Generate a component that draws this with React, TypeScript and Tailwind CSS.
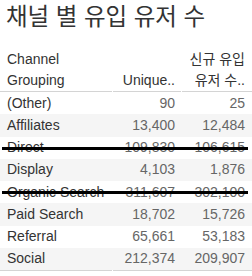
import React from 'react';

type Row = { name: string; unique: string; fresh: string; struck?: boolean };

const rows: Row[] = [
  { name: '(Other)', unique: '90', fresh: '25' },
  { name: 'Affiliates', unique: '13,400', fresh: '12,484' },
  { name: 'Direct', unique: '109,830', fresh: '106,615', struck: true },
  { name: 'Display', unique: '4,103', fresh: '1,876' },
  { name: 'Organic Search', unique: '311,607', fresh: '302,100', struck: true },
  { name: 'Paid Search', unique: '18,702', fresh: '15,726' },
  { name: 'Referral', unique: '65,661', fresh: '53,183' },
  { name: 'Social', unique: '212,374', fresh: '209,907' },
];

const font = { fontFamily: '"Liberation Sans", "Noto Sans CJK KR", sans-serif' };

export default function App() {
  return (
    <div className="w-[252px] h-[276px] bg-white overflow-hidden text-[#333]" style={font}>
      <h1 className="pl-[6px] pt-[2px] h-[48px] text-[23.5px] leading-[30px]">
        채널 별 유입 유저 수
      </h1>

      <div className="grid grid-cols-[113px_69px_70px] text-[14px] leading-[21px]">
        <div className="border-b border-[#d4d4d4] pl-[7px] pt-[1px] mr-[1px]">
          Channel
          <br />
          Grouping
        </div>
        <div className="border-b border-[#d4d4d4] flex items-end justify-end pr-[6px] mr-[1px]">
          Unique..
        </div>
        <div className="border-b border-[#d4d4d4] text-right pr-[7px] pt-[1px]">
          신규 유입
          <br />
          유저 수..
        </div>
      </div>

      <div className="relative">
        {rows.map((r, i) => (
          <div
            key={r.name}
            className={`relative grid grid-cols-[113px_69px_70px] h-[22.25px] items-center text-[14px] ${
              i % 2 === 1 ? 'bg-[#f5f5f5]' : 'bg-white'
            }`}
          >
            <div className="pl-[7px] text-[#333] whitespace-nowrap">{r.name}</div>
            <div className="text-right pr-[7px] text-[#666]">{r.unique}</div>
            <div className="text-right pr-[7px] text-[#666]">{r.fresh}</div>
            {r.struck && (
              <div className="absolute left-[2px] right-[4px] top-[10px] h-[3px] bg-black" />
            )}
          </div>
        ))}
        <div className="grid grid-cols-[113px_139px]">
          <div className="border-t border-[#d4d4d4] mr-[1px]" />
          <div className="border-t border-[#d4d4d4]" />
        </div>
      </div>
    </div>
  );
}
